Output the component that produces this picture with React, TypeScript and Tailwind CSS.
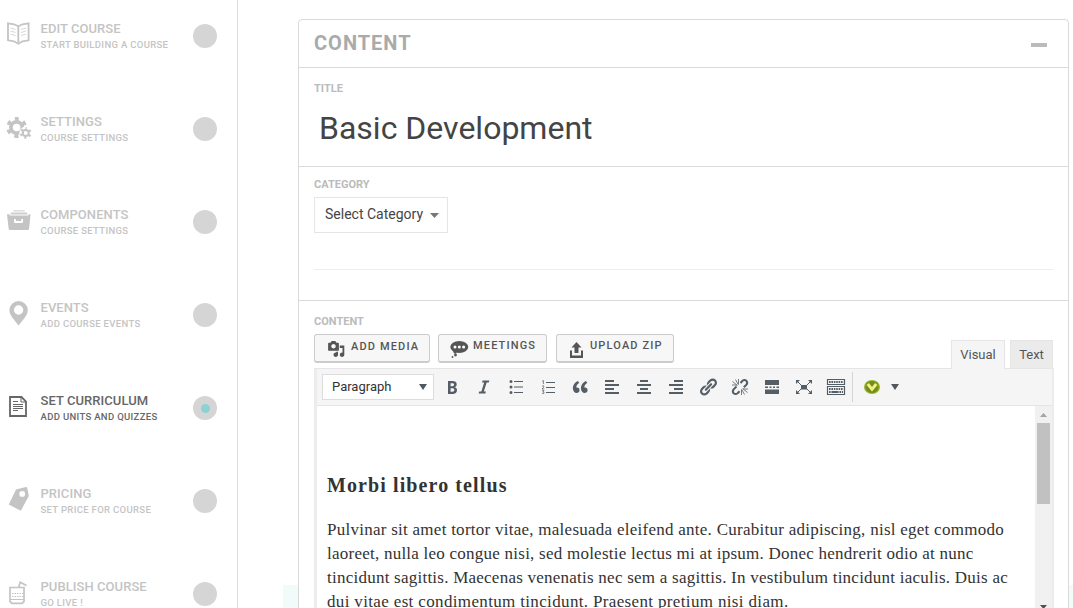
import type { ReactNode } from "react";

const book = (
  <>
    <path d="M8 24 L14 25 L18.3 27 L22.5 25 L28.6 24 V41 L22.5 42 L18.3 44.5 L14 42 L8 41 Z M18.3 27 V43" fill="none" stroke="currentColor" strokeWidth="1.8" transform="translate(0 -.7)" />
    <path d="M10.5 28l5 1.5M10.5 31l5 1.5M10.5 34l5 1.5M21 29.5l5-1.5M21 32.5l5-1.5M21 35.5l5-1.5" stroke="currentColor" strokeWidth=".7" />
  </>
);

const gears = (
  <>
    <circle cx="16.600" cy="127.5" r="5.700" fill="none" stroke="currentColor" strokeWidth="3.800" />
    <circle cx="16.600" cy="127.5" r="8.600" fill="none" stroke="currentColor" strokeWidth="3.6" strokeDasharray="4.200 4.806" strokeDashoffset="2.100" transform="rotate(-90 16.6 127.5)" />
    <circle cx="25.7" cy="133" r="6.400" fill="#fff" />
    <circle cx="25.7" cy="133" r="3" fill="none" stroke="currentColor" strokeWidth="2" />
    <circle cx="25.7" cy="133" r="4.7" fill="none" stroke="currentColor" strokeWidth="2.2" strokeDasharray="2 2.92" strokeDashoffset="1" transform="rotate(-90 25.7 133)" />
  </>
);

const drawer = (
  <g fill="currentColor">
    <path d="M14 210h10q1 0 1 1.6H13q0-1.6 1-1.6z" opacity=".6" />
    <path d="M11.5 212.5h15q1 0 1 2H10.5q0-2 1-2z" opacity=".85" />
    <path fillRule="evenodd" d="M7 214.5q2.5-1 3 1h18q1-2 2.5-1L29 229q-.3 1-1.3 1H10q-1 0-1.3-1zM14 219v2.8q0 1.2 1.2 1.2h6.6q1.2 0 1.2-1.2V219h-1.8v2.1h-5.4V219z" />
  </g>
);

const pin = <path fill="currentColor" fillRule="evenodd" d="M18.6 301a9.2 9.2 0 0 1 9.2 9.2c0 5-5 9.800-9.200 15.300c-4.200-5.500-9.200-10.300-9.200-15.300a9.200 9.200 0 0 1 9.200-9.200zm0 4.300a4.700 4.700 0 1 0 0 9.400a4.700 4.700 0 1 0 0-9.400z" />;

const sheet = (
  <g fill="none" stroke="currentColor">
    <path strokeWidth="1.8" d="M10 397h11.5l4.500 4.500V416H10z" />
    <path d="M21 397v5h5M13 401.500h5M13 404.500h10M13 406.500h10M13 408.500h10M13 410.500h5" />
  </g>
);

const tag = <path fill="currentColor" fillRule="evenodd" d="M16 489.500q5-1.500 10-2.500q1 0 1.200 1q1 4 1.600 8L20.800 510.800L8.800 504.500zM22.200 491a2.900 2.900 0 1 0 0 5.800a2.900 2.900 0 1 0 0-5.800z" />;

const drink = (
  <g fill="none" stroke="currentColor">
    <path strokeWidth="1.7" d="M10 587.500h14v14l-2 1.800h-10l-2-1.800zM18.500 588l1.700-5.700 6.300 3.200" />
    <path strokeDasharray="1.500 1" d="M12 593.500h11M12 596.500h11" />
    <path d="M10 599.500h14" />
  </g>
);

const steps: { title: string; sub: string; icon: ReactNode; top: number; active?: boolean }[] = [
  { title: "EDIT COURSE", sub: "START BUILDING A COURSE", icon: book, top: 18 },
  { title: "SETTINGS", sub: "COURSE SETTINGS", icon: gears, top: 111 },
  { title: "COMPONENTS", sub: "COURSE SETTINGS", icon: drawer, top: 204 },
  { title: "EVENTS", sub: "ADD COURSE EVENTS", icon: pin, top: 297 },
  { title: "SET CURRICULUM", sub: "ADD UNITS AND QUIZZES", icon: sheet, top: 390, active: true },
  { title: "PRICING", sub: "SET PRICE FOR COURSE", icon: tag, top: 483 },
  { title: "PUBLISH COURSE", sub: "GO LIVE !", icon: drink, top: 576 },
];

function Sidebar() {
  return (
    <aside className="h-[608px] w-[238px] shrink-0 overflow-hidden border-r border-[#dedede] pt-[18px]">
      {steps.map((s) => (
        <div key={s.title} className={`flex h-[93px] items-start ${s.active ? "text-[#666]" : "text-[#c4c4c4]"}`}>
          <svg className="h-[36px] w-[40px] shrink-0" viewBox={`0 ${s.top} 40 36`}>{s.icon}</svg>
          <div className="w-[153px] whitespace-nowrap pl-[0.5px] pt-[3px] font-medium">
            <div className="text-[13px] leading-[16px] tracking-[0.06px]">{s.title}</div>
            <div className="text-[9.5px] leading-[16px] tracking-[0.33px]">{s.sub}</div>
          </div>
          <div className="mt-[6px] flex size-6 items-center justify-center rounded-full bg-[#d5d5d5]">
            {s.active && <span className="size-[9px] rounded-full bg-[#8dd2d2]" />}
          </div>
        </div>
      ))}
    </aside>
  );
}

function Label({ children }: { children: ReactNode }) {
  return <div className="h-4 text-[11px] font-bold leading-4 text-[#bbb]">{children}</div>;
}

function MediaButton({ width, gap, icon, children, low }: { width: string; gap: string; icon: ReactNode; children: ReactNode; low?: boolean }) {
  return (
    <button className={`flex h-[29px] items-start rounded-[3px] border border-b-2 border-[#ccc] bg-[#f7f7f7] text-[11px] font-medium leading-[14px] tracking-[1.15px] text-[#555] ${width}`}>
      <svg className={`h-[26px] shrink-0 ${gap}`} viewBox="0 0 32 26" preserveAspectRatio="xMinYMin">{icon}</svg>
      <span className={low ? "whitespace-nowrap pt-[5px]" : "whitespace-nowrap pt-[4px]"}>{children}</span>
    </button>
  );
}

const tools: ReactNode[] = [
  <path d="M6 4v13h4.540c1.370 0 2.460-.33 3.260-1 .8-.66 1.200-1.580 1.200-2.770 0-.84-.17-1.510-.51-2.010s-.9-.85-1.670-1.030v-.09c.57-.1 1.020-.4 1.360-.9s.51-1.130.51-1.910c0-1.140-.39-1.980-1.170-2.500C12.750 4.260 11.500 4 9.780 4H6zm2.570 5.150V6.260h1.360c.73 0 1.270.11 1.610.32.34.22.51.58.51 1.070 0 .54-.16.92-.47 1.150s-.82.35-1.510.35h-1.500zm0 2.190h1.600c1.440 0 2.160.53 2.160 1.610 0 .6-.17 1.050-.51 1.340s-.86.43-1.570.43H8.570v-3.380z" />,
  <path d="M14.780 6h-2.130l-2.800 9h2.120l-.62 2H4.600l.62-2h2.140l2.800-9H8.030l.62-2h6.750z" transform="translate(0 -.5)" />,
  <path d="M8 4h9v1H8zM8 9.500h9v1H8zM8 15h9v1H8zM6.500 4.500a1.500 1.500 0 1 1-3 0a1.500 1.500 0 1 1 3 0zM6.500 10a1.500 1.500 0 1 1-3 0a1.500 1.500 0 1 1 3 0zM6.500 15.500a1.500 1.500 0 1 1-3 0a1.500 1.500 0 1 1 3 0z" />,
  <g><path d="M8 5h9v1H8zM8 10h9v1H8zM8 15h9v1H8z" /><path fill="none" stroke="currentColor" strokeWidth=".75" d="M4.200 4.200l1.200-.6V7M4 9.200q1-1 1.900-.2q.5 1-1.900 3h2.300M4 13.700h2l-1 1.200q1.500.1 1.100 1.200q-.8.800-2.100.2" /></g>,
  <path d="M9.490 13.220c0-.74-.2-1.380-.61-1.900-.62-.78-1.830-.88-2.530-.72-.29-1.650 1.110-3.750 2.920-4.650L7.880 4c-2.730 1.300-5.420 4.280-4.960 8.050C3.210 14.430 4.590 16 6.540 16c.85 0 1.560-.25 2.120-.75s.83-1.180.83-2.030zm8.050 0c0-.74-.2-1.380-.61-1.900-.63-.78-1.830-.88-2.530-.72-.29-1.650 1.110-3.750 2.920-4.650L15.930 4c-2.730 1.300-5.410 4.280-4.950 8.050.29 2.380 1.660 3.950 3.610 3.950.85 0 1.560-.25 2.120-.75s.83-1.180.83-2.030z" />,
  <path d="M3 3h9v2H3zM3 7h14v2H3zM3 11h9v2H3zM3 15h14v2H3z" />,
  <path d="M6 3h8v2H6zM3 7h14v2H3zM6 11h8v2H6zM3 15h14v2H3z" />,
  <path d="M8 3h9v2H8zM3 7h14v2H3zM8 11h9v2H8zM3 15h14v2H3z" />,
  <path d="M17.740 2.760c1.680 1.690 1.680 4.410 0 6.100l-1.530 1.520c-1.120 1.120-2.700 1.470-4.140 1.090l2.620-2.610.76-.77.76-.76c.84-.84.84-2.200 0-3.040-.84-.85-2.200-.85-3.040 0l-.77.76-3.380 3.380c-.37-1.440-.02-3.020 1.100-4.140l1.520-1.530c1.690-1.680 4.420-1.680 6.100 0zM8.590 13.430l5.340-5.340c.42-.42.42-1.100 0-1.520-.44-.43-1.130-.39-1.530 0l-5.330 5.340c-.42.42-.42 1.100 0 1.520.44.43 1.130.39 1.520 0zm-.76 2.290l4.140-4.150c.38 1.440.03 3.020-1.090 4.140l-1.520 1.530c-1.690 1.680-4.410 1.680-6.100 0-1.680-1.680-1.680-4.420 0-6.100l1.530-1.520c1.120-1.120 2.700-1.470 4.140-1.100l-4.140 4.150c-.85.84-.85 2.200 0 3.050.84.84 2.200.84 3.040 0z" />,
  <g fill="none" stroke="currentColor"><path strokeWidth="2" d="M10.500 6l2-2.200q2-1.600 3.900 0q1.600 2 0 3.900l-2.600 2.600M6.500 9.500l-2.900 2.800q-1.500 2 0 4q2 1.500 4 0l2-2" /><path strokeWidth=".8" d="M8.500 2v5.500M5.500 2.500l2.700 5M2.500 4.500l5 4M2 8h5M11.500 18v-5.500M14.500 17.500l-2.700-5M17.500 15.500l-5-4M18 12h-5" /></g>,
  <path d="M3 3h14v5H3zM3 9.500h3v1.500H3zM7.500 9.500h2V11h-2zM11 9.500h2V11h-2zM14.500 9.500H17V11h-2.500zM3 12.500h14v4.500H3z" />,
  <g><path d="M7 8h6v4.500H7zM2 3h4L2 7zM18 3h-4l4 4zM2 17h4l-4-4zM18 17h-4l4-4z" /><path stroke="currentColor" strokeWidth="1" d="M4 5l4 4M16 5l-4 4M4 15l4-4M16 15l-4-4" /></g>,
  <g fill="none" stroke="currentColor"><path strokeWidth="1.200" d="M1.500 2.500h17v5h-17zM1.500 9.500h17v8h-17z" /><path strokeWidth="2" strokeDasharray="1.600 .8" d="M3 5h14.500M3 12h14.500" /><path strokeWidth="2" strokeDasharray="1.600 .8 7.200 .8" d="M3 15h14" /></g>,
];

function Toolbar() {
  return (
    <div className="flex h-[37px] items-center border-b border-[#e5e5e5] bg-[#f5f5f5] pl-[5px] text-[#555d66]">
      <div className="mr-[2px] flex h-[26px] w-[112px] items-center justify-between border border-[#ddd] bg-white pl-[9px] pr-[6px] text-[13px] text-[#333]">
        <span>Paragraph</span>
        <svg className="h-[6px] w-2" viewBox="0 0 8 6"><path d="M0 0h8L4 6z" fill="#50575e" /></svg>
      </div>
      {tools.map((t, i) => (
        <span key={i} className="flex w-8 shrink-0 justify-center">
          <svg className="size-5" viewBox="0 0 20 20" fill="currentColor">{t}</svg>
        </span>
      ))}
      <span className="h-[30px] w-px bg-[#d5d5d5]" />
      <svg className="ml-[11px] h-4 w-4" viewBox="0 0 16 16">
        <ellipse cx="8" cy="8" rx="8" ry="7" fill="#9db02c" />
        <ellipse cx="8" cy="8" rx="6.600" ry="6" fill="#6f8f1c" />
        <path d="M2.500 6l2.500-2L8 8l3-4 2.500 2L8 12.500z" fill="#f4ef85" />
      </svg>
      <svg className="ml-[11px] h-[6px] w-2" viewBox="0 0 8 6"><path d="M0 0h8L4 6z" fill="#50575e" /></svg>
    </div>
  );
}

function EditorBody() {
  return (
    <div className="flex h-[210px] bg-white">
      <div className="flex-1 overflow-hidden whitespace-nowrap pl-[10px] pt-[66px] font-['Liberation_Serif',serif] text-[#333]">
        <h3 className="mb-[20px] text-[20px] font-bold leading-[26px]"><span className="tracking-[1.1px]">Morbi libero tellus</span></h3>
        <div className="text-[17px] leading-6">
          <div className="tracking-[0.26px]">Pulvinar sit amet tortor vitae, malesuada eleifend ante. Curabitur adipiscing, nisl eget commodo</div>
          <div className="tracking-[0.24px]">laoreet, nulla leo congue nisi, sed molestie lectus mi at ipsum. Donec hendrerit odio at nunc</div>
          <div className="tracking-[0.24px]">tincidunt sagittis. Maecenas venenatis nec sem a sagittis. In vestibulum tincidunt iaculis. Duis ac</div>
          <div className="tracking-[0.35px]">dui vitae est condimentum tincidunt. Praesent pretium nisi diam.</div>
        </div>
      </div>
      <div className="flex w-[17px] flex-col items-center bg-[#f1f1f1]">
        <svg className="mb-[6px] mt-[7px] h-[4px] w-[7px] shrink-0" viewBox="0 0 7 4"><path d="M0 4h7L3.500 0z" fill="#a3a3a3" /></svg>
        <div className="h-[81px] w-[13px] shrink-0 bg-[#c1c1c1]" />
        <svg className="mt-[101px] h-[4px] w-[7px] shrink-0" viewBox="0 0 7 4"><path d="M0 0h7L3.500 4z" fill="#505050" /></svg>
      </div>
    </div>
  );
}

const media = (
  <path transform="translate(12.200 5) scale(.9)" fill="#555" d="M13 11V4c0-.55-.45-1-1-1h-1.670L9 1H5L3.670 3H2c-.55 0-1 .45-1 1v7c0 .55.45 1 1 1h10c.55 0 1-.45 1-1zM7 4.500c1.380 0 2.500 1.120 2.500 2.500S8.380 9.500 7 9.500 4.500 8.380 4.500 7 5.620 4.500 7 4.500zM14 6h5v10.500c0 1.380-1.120 2.500-2.500 2.500S14 17.880 14 16.500s1.120-2.500 2.500-2.500c.17 0 .34.02.5.05V9h-3V6zm-4 8.050V13h2v3.500c0 1.380-1.120 2.500-2.500 2.500S7 17.880 7 16.500 8.120 14 9.500 14c.17 0 .34.02.5.05z" />
);
const chat = (
  <g fill="#555">
    <ellipse cx="20.300" cy="12" rx="9" ry="6" />
    <path d="M13.500 14h6l-2.500 4.500h-2z" />
    <circle cx="16.500" cy="20" r="1.400" /><circle cx="13.500" cy="22" r=".9" />
    <g fill="#fff"><circle cx="16" cy="12" r="1.500" /><circle cx="20.300" cy="12" r="1.500" /><circle cx="24.600" cy="12" r="1.500" /></g>
  </g>
);
const upload = <path fill="#555" d="M19.500 7l5 5.500h-3V18h-4v-5.500h-3zM13 15.500h2v5h9v-5h2V23H13z" />;

export default function App() {
  return (
    <div className="flex h-[608px] w-[1073px] overflow-hidden bg-white font-[Roboto,sans-serif]">
      <Sidebar />
      <div className="mt-[585px] ml-[45px] h-[23px] w-[15px] shrink-0 bg-[#f1fcfa]" />
      <main className="mt-[19px] h-[600px] w-[771px] shrink-0 rounded-t-[4px] border border-[#dadada] bg-white">
        <header className="flex h-[48px] items-center justify-between border-b border-[#dadada] pl-[15px] pr-[21px]">
          <h2 className="-mt-px text-[20px] font-bold leading-[28px] tracking-[1px] text-[#aaa]">CONTENT</h2>
          <span className="mt-[3px] h-1 w-4 bg-[#bbb]" />
        </header>
        <section className="h-[99px] border-b border-[#dadada] px-[15px] pt-[13px]">
          <Label>TITLE</Label>
          <div className="mt-[11px] pl-[5px] text-[32px] leading-[40px] text-[#444]">Basic Development</div>
        </section>
        <section className="h-[134px] border-b border-[#dadada] px-[15px] pt-[10px]">
          <Label>CATEGORY</Label>
          <div className="mt-[4px] flex h-[36px] w-[134px] items-center border border-[#e5e5e5] pl-[10px] text-[14px] text-[#444]">
            <span className="-mt-[2px] w-[105px]">Select Category</span>
            <svg className="mt-px h-[5px] w-[9px]" viewBox="0 0 9 5"><path d="M0 0h9L4.500 5z" fill="#777" /></svg>
          </div>
          <div className="mt-[36px] h-px w-[739px] bg-[#eee]" />
        </section>
        <section className="px-[15px] pt-[13px]">
          <Label>CONTENT</Label>
          <div className="mt-[4px] flex h-[35px] items-start">
            <div className="flex gap-[8px]">
              <MediaButton width="w-[116px]" gap="w-[36px]" icon={media} low>ADD MEDIA</MediaButton>
              <MediaButton width="w-[109px]" gap="w-[34px]" icon={chat}>MEETINGS</MediaButton>
              <MediaButton width="ml-[1px] w-[118px]" gap="w-[33px]" icon={upload}>UPLOAD ZIP</MediaButton>
            </div>
            <div className="ml-auto flex gap-[5px] pt-[6px] text-[13px] text-[#555]">
              <div className="relative z-10 flex h-[29px] w-[54px] items-center justify-center border border-b-0 border-[#e5e5e5] bg-[#f5f5f5]">Visual</div>
              <div className="flex h-[28px] w-[43px] items-center justify-center border border-b-0 border-[#e5e5e5] bg-[#ebebeb]">Text</div>
            </div>
          </div>
          <div className="-mt-px w-[740px] border-l-[3px] border-r-2 border-t border-x-[#ececec] border-t-[#e5e5e5]">
            <Toolbar />
            <EditorBody />
          </div>
        </section>
      </main>
      <div className="mt-[585px] h-[23px] w-1 shrink-0 bg-[#f1fcfa]" />
    </div>
  );
}
